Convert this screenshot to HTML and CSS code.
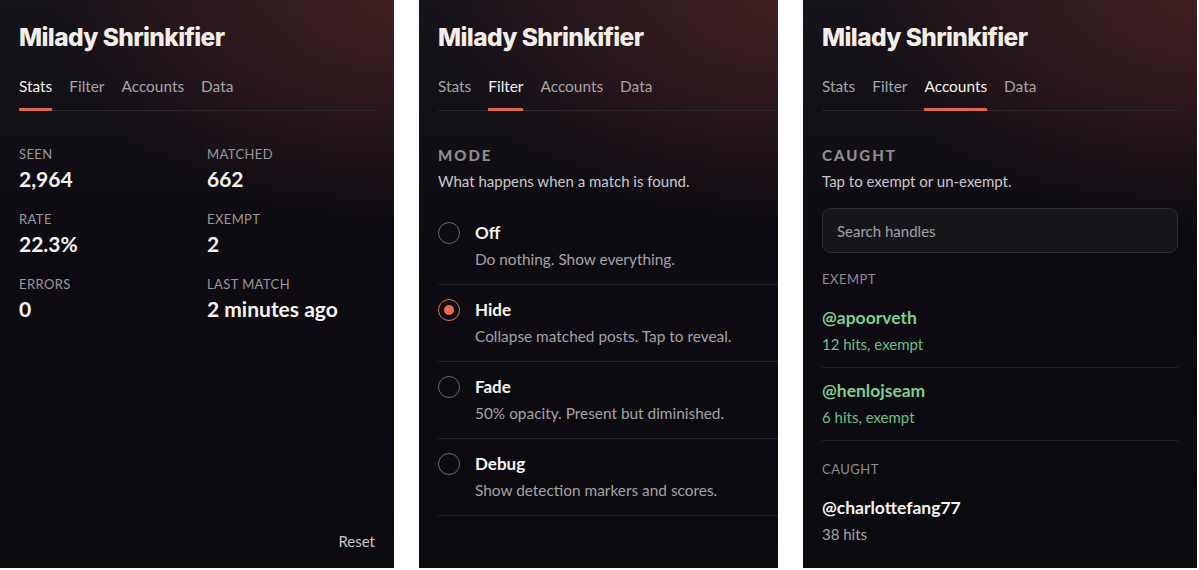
FILE: index.html
```html
<!DOCTYPE html>
<html lang="en">
<head>
<meta charset="utf-8">
<title>Milady Shrinkifier</title>
<link rel="stylesheet" href="styles.css">
</head>
<body>
<div class="board">
  <section class="panel">
    <h1 class="title">Milady Shrinkifier</h1>
    <nav class="tabs">
      <span class="tab active">Stats</span>
      <span class="tab">Filter</span>
      <span class="tab">Accounts</span>
      <span class="tab">Data</span>
    </nav>
    <div class="stats">
      <div class="stat"><div class="stat-label">SEEN</div><div class="stat-value">2,964</div></div>
      <div class="stat"><div class="stat-label">MATCHED</div><div class="stat-value">662</div></div>
      <div class="stat"><div class="stat-label">RATE</div><div class="stat-value">22.3%</div></div>
      <div class="stat"><div class="stat-label">EXEMPT</div><div class="stat-value">2</div></div>
      <div class="stat"><div class="stat-label">ERRORS</div><div class="stat-value">0</div></div>
      <div class="stat"><div class="stat-label">LAST MATCH</div><div class="stat-value">2 minutes ago</div></div>
    </div>
    <div class="footer"><span class="reset">Reset</span></div>
  </section>

  <section class="panel panel-cropped">
    <h1 class="title">Milady Shrinkifier</h1>
    <nav class="tabs">
      <span class="tab">Stats</span>
      <span class="tab active">Filter</span>
      <span class="tab">Accounts</span>
      <span class="tab">Data</span>
    </nav>
    <h2 class="section-head">MODE</h2>
    <p class="section-sub">What happens when a match is found.</p>
    <div class="options">
      <div class="option">
        <span class="radio"></span>
        <div class="option-text"><div class="option-name">Off</div><div class="option-desc">Do nothing. Show everything.</div></div>
      </div>
      <div class="option">
        <span class="radio checked"></span>
        <div class="option-text"><div class="option-name">Hide</div><div class="option-desc">Collapse matched posts. Tap to reveal.</div></div>
      </div>
      <div class="option">
        <span class="radio"></span>
        <div class="option-text"><div class="option-name">Fade</div><div class="option-desc">50% opacity. Present but diminished.</div></div>
      </div>
      <div class="option">
        <span class="radio"></span>
        <div class="option-text"><div class="option-name">Debug</div><div class="option-desc">Show detection markers and scores.</div></div>
      </div>
    </div>
  </section>

  <section class="panel">
    <h1 class="title">Milady Shrinkifier</h1>
    <nav class="tabs">
      <span class="tab">Stats</span>
      <span class="tab">Filter</span>
      <span class="tab active">Accounts</span>
      <span class="tab">Data</span>
    </nav>
    <h2 class="section-head">CAUGHT</h2>
    <p class="section-sub">Tap to exempt or un-exempt.</p>
    <div class="search"><span class="search-ph">Search handles</span></div>
    <div class="group-label first">EXEMPT</div>
    <div class="account exempt">
      <div class="handle">@apoorveth</div>
      <div class="hits">12 hits, exempt</div>
    </div>
    <div class="account exempt">
      <div class="handle">@henlojseam</div>
      <div class="hits">6 hits, exempt</div>
    </div>
    <div class="group-label">CAUGHT</div>
    <div class="account plain">
      <div class="handle">@charlottefang77</div>
      <div class="hits">38 hits</div>
    </div>
  </section>
</div>
</body>
</html>
```

FILE: styles.css
```css
* { box-sizing: border-box; }
html, body { margin: 0; padding: 0; background: #ffffff; }
body {
  font-family: Lato, "Noto Sans", sans-serif;
  width: 1199px;
  height: 570px;
  overflow: hidden;
}
.board {
  display: flex;
  gap: 25px;
  height: 568px;
}
.panel {
  width: 394px;
  height: 568px;
  flex: none;
  display: flex;
  flex-direction: column;
  padding: 22px 19px 17px 19px;
  overflow: hidden;
  background:
    radial-gradient(ellipse 340px 220px at 100% 0%, rgba(108, 44, 42, 0.5), rgba(108, 44, 42, 0) 100%),
    linear-gradient(180deg, #17131a 0%, #0e0c12 40%, #0b0a0f 100%);
}
.panel > * { flex-shrink: 0; }
.panel-cropped {
  width: 359px;
  padding-right: 0;
}
.title {
  margin: 0;
  font-family: Inter, Lato, sans-serif;
  font-size: 24.5px;
  line-height: 30px;
  font-weight: 800;
  color: #f3eee7;
  letter-spacing: -0.6px;
}
.tabs {
  margin-top: 24px;
  display: flex;
  gap: 17px;
  border-bottom: 1px solid #2a272d;
}
.tab {
  position: relative;
  font-size: 15.4px;
  line-height: 20px;
  padding-bottom: 14px;
  color: #a6a4a8;
}
.tab.active { color: #f2f0ee; }
.tab.active::after {
  content: "";
  position: absolute;
  left: 0;
  right: 0;
  bottom: -1px;
  height: 3px;
  background: #e0664c;
}

/* stats */
.stats {
  margin-top: 35px;
  display: grid;
  grid-template-columns: 1fr 1fr;
  column-gap: 20px;
  row-gap: 19px;
}
.stat-label {
  font-size: 13px;
  line-height: 16px;
  color: #9a989c;
  letter-spacing: 0.4px;
}
.stat-value {
  margin-top: 4px;
  font-size: 21px;
  line-height: 26px;
  font-weight: 700;
  color: #f6f4f2;
}
.footer {
  margin-top: auto;
  display: flex;
  justify-content: flex-end;
}
.reset {
  font-size: 15px;
  line-height: 20px;
  color: #c9c7cb;
}

/* filter */
.section-head {
  margin: 35px 0 0 0;
  font-size: 15px;
  line-height: 18px;
  font-weight: 900;
  letter-spacing: 2px;
  color: #8e8c90;
}
.section-sub {
  margin: 7px 0 0 0;
  font-size: 15px;
  line-height: 20px;
  color: #cac8cc;
}
.options { margin-top: 17px; }
.option {
  display: flex;
  align-items: flex-start;
  gap: 15px;
  padding: 14px 0 15px 0;
  border-bottom: 1px solid #232127;
}
.radio {
  flex: none;
  width: 22px;
  height: 22px;
  border-radius: 50%;
  border: 1.5px solid #6b696e;
  display: flex;
  align-items: center;
  justify-content: center;
}
.radio.checked { border-color: #e56b50; }
.radio.checked::after {
  content: "";
  width: 10px;
  height: 10px;
  border-radius: 50%;
  background: #f06a4f;
}
.option-name {
  font-size: 17px;
  line-height: 22px;
  font-weight: 700;
  color: #f6f4f2;
}
.option-desc {
  margin-top: 5px;
  font-size: 15.4px;
  line-height: 20px;
  color: #a4a2a6;
}

/* accounts */
.search {
  margin-top: 17px;
  height: 45px;
  border: 1px solid #302e34;
  border-radius: 9px;
  background: #161519;
  display: flex;
  align-items: center;
  padding-left: 14px;
}
.search-ph {
  font-size: 15px;
  color: #a3a1a5;
}
.group-label {
  margin-top: 20px;
  font-size: 13px;
  line-height: 16px;
  letter-spacing: 0.5px;
  color: #8f8d91;
}
.group-label.first { margin-top: 18px; }
.account {
  margin-top: 8px;
  padding: 12px 0 13px 0;
  border-bottom: 1px solid #232127;
}
.account + .account { margin-top: 0; }
.account.plain { border-bottom: none; }
.handle {
  font-size: 17.5px;
  line-height: 22px;
  font-weight: 700;
  color: #f6f4f2;
}
.hits {
  margin-top: 5px;
  font-size: 15px;
  line-height: 20px;
  color: #a4a2a6;
}
.account.exempt .handle { color: #7fce93; }
.account.exempt .hits { color: #6fbe86; }
```
